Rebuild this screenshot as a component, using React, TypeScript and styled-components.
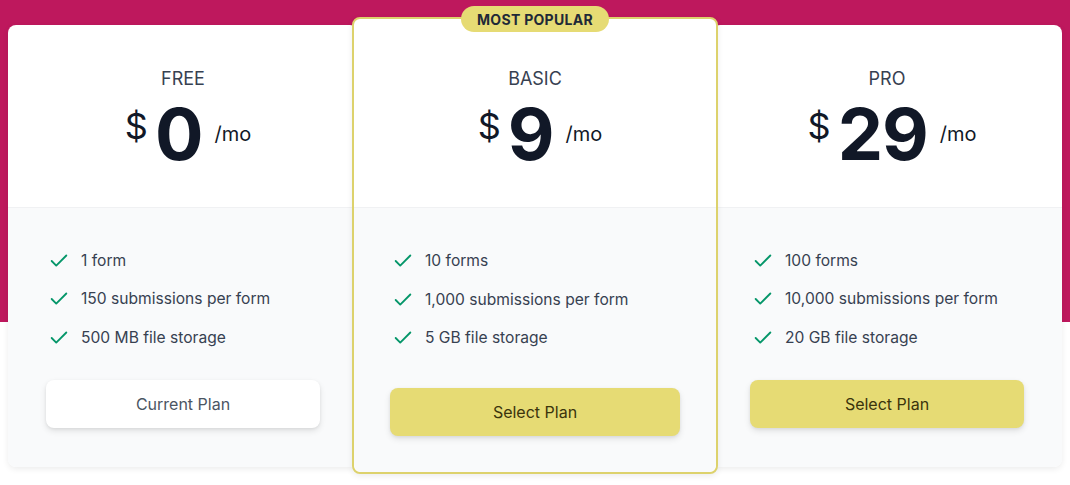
import styled, { createGlobalStyle } from "styled-components";
import { Check } from "lucide-react";

const GlobalStyle = createGlobalStyle`
  html, body {
    margin: 0;
    padding: 0;
    background: #ffffff;
  }
  * { box-sizing: border-box; }
`;

const Page = styled.div`
  min-height: 485px;
  background: linear-gradient(to bottom, #be185d 0, #be185d 322px, #ffffff 322px);
  font-family: Inter, "Noto Sans", sans-serif;
`;

const Row = styled.div`
  display: flex;
  align-items: center;
  padding: 17px 8px 0;
`;

const Card = styled.div<{ $featured?: boolean }>`
  position: relative;
  z-index: ${(p) => (p.$featured ? 2 : 1)};
  flex: none;
  width: ${(p) => (p.$featured ? "366px" : "350px")};
  margin: ${(p) => (p.$featured ? "0 -6px" : "0")};
  background: #ffffff;
  border-radius: 8px;
  border: ${(p) => (p.$featured ? "2px solid #ddd26c" : "none")};
  box-shadow: 0 2px 6px rgba(0, 0, 0, 0.08);
`;

const Badge = styled.div`
  position: absolute;
  top: 0;
  left: 50%;
  transform: translate(-50%, -50%);
  height: 26px;
  padding: 0 16px;
  display: flex;
  align-items: center;
  border-radius: 999px;
  background: #e6db74;
  color: #1f2937;
  font-size: 14px;
  font-weight: 700;
  letter-spacing: 0.3px;
  white-space: nowrap;
`;

const Header = styled.div<{ $featured?: boolean }>`
  display: flex;
  flex-direction: column;
  align-items: center;
  padding: ${(p) => (p.$featured ? "46px 0 37px" : "40px 0 37px")};
  border-bottom: 1px solid #f0f1f3;
  border-radius: 8px 8px 0 0;
`;

const PlanName = styled.div`
  font-size: 18px;
  line-height: 28px;
  color: #374151;
  text-transform: uppercase;
`;

const PriceRow = styled.div`
  display: flex;
  align-items: flex-start;
  margin-top: 5px;
  padding-left: 10px;
  color: #111827;
`;

const Currency = styled.span`
  font-size: 36px;
  line-height: 36px;
  margin-top: 10px;
  margin-right: 7px;
`;

const Amount = styled.span`
  font-size: 72px;
  line-height: 72px;
  font-weight: 700;
  letter-spacing: -1px;
`;

const Period = styled.span`
  font-size: 20px;
  line-height: 20px;
  margin-top: 26px;
  margin-left: 12px;
`;

const Body = styled.div<{ $featured?: boolean }>`
  background: #f9fafb;
  padding: ${(p) => (p.$featured ? "41px 36px 36px" : "41px 38px 39px")};
  border-radius: 0 0 8px 8px;
`;

const FeatureList = styled.ul`
  list-style: none;
  margin: 0;
  padding: 0 0 0 2px;
  display: flex;
  flex-direction: column;
  gap: 14.5px;
`;

const Feature = styled.li`
  display: flex;
  align-items: center;
  gap: 11px;
  font-size: 15.6px;
  line-height: 24px;
  color: #374151;
`;

const Button = styled.button<{ $primary?: boolean; $featured?: boolean }>`
  display: block;
  width: 100%;
  height: 48px;
  margin-top: ${(p) => (p.$featured ? "38px" : "30px")};
  border: none;
  border-radius: 8px;
  font-family: inherit;
  font-size: 16px;
  cursor: pointer;
  background: ${(p) => (p.$primary ? "#e6db74" : "#ffffff")};
  color: ${(p) => (p.$primary ? "#3b340c" : "#4b5563")};
  box-shadow: 0 3px 6px rgba(0, 0, 0, 0.1), 0 1px 3px rgba(0, 0, 0, 0.06);
`;

interface IPlan {
  name: string;
  price: string;
  features: string[];
  current?: boolean;
  featured?: boolean;
}

const plans: IPlan[] = [
  {
    name: "Free",
    price: "0",
    features: ["1 form", "150 submissions per form", "500 MB file storage"],
    current: true,
  },
  {
    name: "Basic",
    price: "9",
    features: ["10 forms", "1,000 submissions per form", "5 GB file storage"],
    featured: true,
  },
  {
    name: "Pro",
    price: "29",
    features: ["100 forms", "10,000 submissions per form", "20 GB file storage"],
  },
];

function PlanCard({ plan }: { plan: IPlan }) {
  return (
    <Card $featured={plan.featured}>
      {plan.featured && <Badge>MOST POPULAR</Badge>}
      <Header $featured={plan.featured}>
        <PlanName>{plan.name}</PlanName>
        <PriceRow>
          <Currency>$</Currency>
          <Amount>{plan.price}</Amount>
          <Period>/mo</Period>
        </PriceRow>
      </Header>
      <Body $featured={plan.featured}>
        <FeatureList>
          {plan.features.map((f) => (
            <Feature key={f}>
              <Check size={22} strokeWidth={2} color="#059669" />
              {f}
            </Feature>
          ))}
        </FeatureList>
        <Button $primary={!plan.current} $featured={plan.featured}>
          {plan.current ? "Current Plan" : "Select Plan"}
        </Button>
      </Body>
    </Card>
  );
}

export default function App() {
  return (
    <>
      <GlobalStyle />
      <Page>
        <Row>
          {plans.map((p) => (
            <PlanCard key={p.name} plan={p} />
          ))}
        </Row>
      </Page>
    </>
  );
}
